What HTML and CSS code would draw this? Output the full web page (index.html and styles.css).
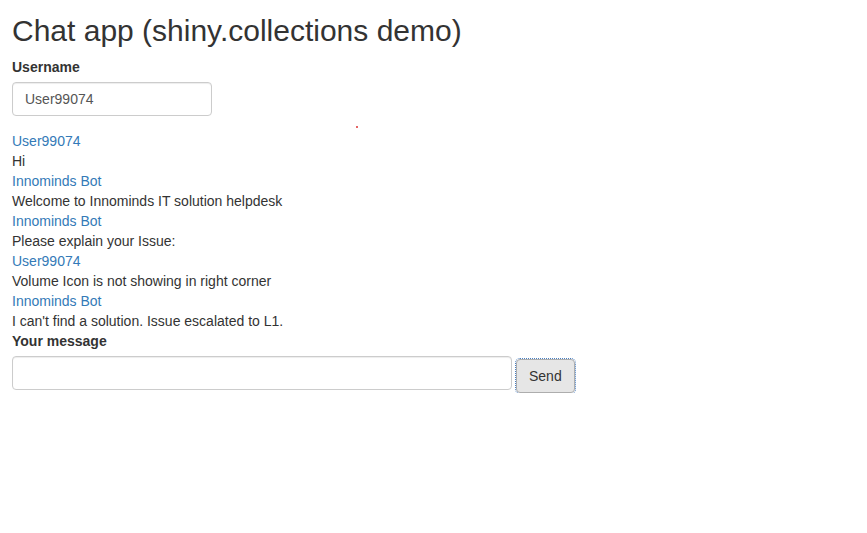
FILE: index.html
```html
<!DOCTYPE html>
<html>
<head>
<meta charset="utf-8">
<title>Chat app</title>
<link rel="stylesheet" href="styles.css">
</head>
<body>
<div class="page">
  <h2 class="title">Chat app (shiny.collections demo)</h2>
  <div class="form-group">
    <label class="label" for="username">Username</label>
    <input id="username" class="input input-user" type="text" value="User99074">
  </div>
  <span class="dot"></span>
  <div class="chat">
    <div class="user">User99074</div>
    <div class="msg">Hi</div>
    <div class="user">Innominds Bot</div>
    <div class="msg">Welcome to Innominds IT solution helpdesk</div>
    <div class="user">Innominds Bot</div>
    <div class="msg">Please explain your Issue:</div>
    <div class="user">User99074</div>
    <div class="msg">Volume Icon is not showing in right corner</div>
    <div class="user">Innominds Bot</div>
    <div class="msg">I can't find a solution. Issue escalated to L1.</div>
  </div>
  <label class="label" for="message">Your message</label>
  <div class="send-row">
    <input id="message" class="input input-msg" type="text">
    <button class="btn">Send</button>
  </div>
</div>
</body>
</html>
```
FILE: styles.css
```css
html, body {
  margin: 0;
  padding: 0;
  background: #fff;
}
body {
  font-family: "Liberation Sans", Arial, sans-serif;
  font-size: 14px;
  line-height: 20px;
  color: #333;
}
.page {
  position: relative;
  padding: 0 12px;
}
.title {
  margin: 0;
  padding-top: 14px;
  font-size: 30px;
  line-height: 33px;
  font-weight: normal;
  color: #333;
  margin-bottom: 10px;
}
.label {
  display: block;
  font-weight: bold;
  margin-bottom: 5px;
  line-height: 20px;
}
.form-group {
  margin-bottom: 15px;
}
.input {
  display: block;
  box-sizing: border-box;
  height: 34px;
  padding: 6px 12px;
  font-family: "Liberation Sans", Arial, sans-serif;
  font-size: 14px;
  color: #555;
  background: #fff;
  border: 1px solid #ccc;
  border-radius: 4px;
  box-shadow: inset 0 1px 1px rgba(0,0,0,0.075);
  outline: none;
}
.input-user {
  width: 200px;
  margin-top: 1px;
}
.dot {
  position: absolute;
  left: 356px;
  top: 126px;
  width: 2px;
  height: 2px;
  background: #d33;
  border-radius: 1px;
}
.chat .user {
  color: #337ab7;
}
.chat .msg {
  color: #333;
}
.send-row {
  display: flex;
  align-items: flex-start;
  gap: 4px;
}
.input-msg {
  width: 500px;
}
.btn {
  box-sizing: border-box;
  margin-top: 3px;
  height: 34px;
  padding: 6px 12px;
  font-family: "Liberation Sans", Arial, sans-serif;
  font-size: 14px;
  line-height: 20px;
  color: #333;
  background: #e6e6e6;
  border: 1px solid #adadad;
  border-radius: 4px;
  outline: 1px dotted #4a7fc1;
  outline-offset: 0;
}
```
